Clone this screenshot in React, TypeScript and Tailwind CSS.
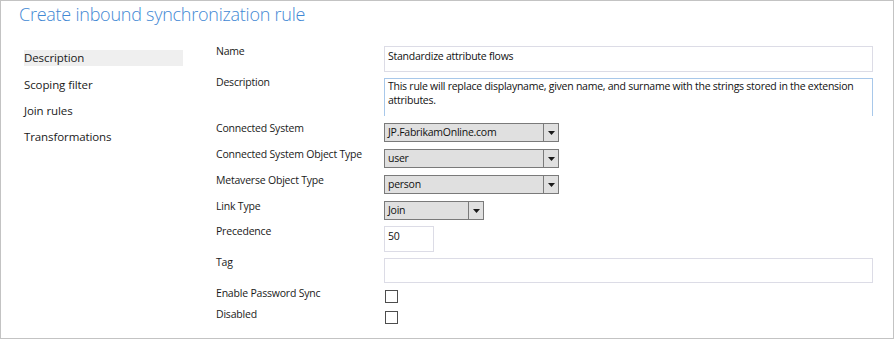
import React from "react"

const font = { fontFamily: "'Open Sans', 'Noto Sans', sans-serif" }

function Arrow() {
    return (
        <svg width="7" height="4" viewBox="0 0 7 4" className="block">
            <path d="M0 0 H7 L3.5 4 Z" fill="#1a1a1a" />
        </svg>
    )
}

function Select({ value, width, split }: { value: string; width: string; split: string }) {
    return (
        <div className={`flex h-[19px] ${width} border border-[#7a7a7a] bg-[#e0e0e0]`}>
            <div className={`${split} flex items-center pl-[3px] text-[10.5px] leading-none tracking-[-0.25px] text-[#111]`}>{value}</div>
            <div className="flex flex-1 items-center justify-center border-l border-[#7a7a7a]">
                <Arrow />
            </div>
        </div>
    )
}

function Row({ label, mt, fieldMt, children }: { label: string; mt: string; fieldMt: string; children: React.ReactNode }) {
    return (
        <div className={`flex items-start ${mt}`}>
            <div className="w-[168px] shrink-0 text-[10.5px] leading-[14px] tracking-[-0.2px] text-[#1a1a1a]">{label}</div>
            <div className={`${fieldMt} flex-1`}>{children}</div>
        </div>
    )
}

export default function App() {
    return (
        <div style={font} className="relative h-[339px] w-[895px] bg-white">
            <div className="h-[339px] w-[894px] border border-[#c3c3c3]">
                {/* Title */}
                <div className="pl-[18px] pt-[1px] text-[18px] font-light leading-[24px] tracking-[-0.25px] text-[#3f88d4]">
                    Create inbound synchronization rule
                </div>

                <div className="flex pt-[18px]">
                    {/* Left nav */}
                    <nav className="w-[215px] shrink-0 pl-[23px] pt-[6px] text-[11.5px] tracking-[-0.1px] text-[#1a1a1a]">
                        <div className="w-[159px] bg-[#efefef] leading-[16px]">Description</div>
                        <div className="mt-[11px] leading-[16px]">Scoping filter</div>
                        <div className="mt-[10px] leading-[16px]">Join rules</div>
                        <div className="mt-[10px] leading-[16px]">Transformations</div>
                    </nav>

                    {/* Form */}
                    <div className="w-[656px]">
                        <Row label="Name" mt="mt-0" fieldMt="mt-[2px]">
                            <div className="h-[26px] w-[489px] border border-[#dcdce6] px-[3px] pt-[2px] text-[10.5px] leading-[14px] tracking-[-0.25px] text-[#111]">
                                Standardize attribute flows
                            </div>
                        </Row>
                        <Row label="Description" mt="mt-[3px]" fieldMt="mt-[3px]">
                            <div className="h-[38px] w-[489px] border border-b-0 border-[#a8c8ea] px-[3px] pt-0 text-[10.5px] leading-[14px] tracking-[-0.25px] text-[#111]">
                                This rule will replace displayname, given name, and surname with the strings stored in the extension attributes.
                            </div>
                        </Row>
                        <Row label="Connected System" mt="mt-[5px]" fieldMt="mt-[2px]">
                            <Select value="JP.FabrikamOnline.com" width="w-[175px]" split="w-[158px]" />
                        </Row>
                        <Row label="Connected System Object Type" mt="mt-[5px]" fieldMt="mt-[2px]">
                            <Select value="user" width="w-[175px]" split="w-[158px]" />
                        </Row>
                        <Row label="Metaverse Object Type" mt="mt-[5px]" fieldMt="mt-[2px]">
                            <Select value="person" width="w-[175px]" split="w-[158px]" />
                        </Row>
                        <Row label="Link Type" mt="mt-[5px]" fieldMt="mt-[2px]">
                            <Select value="Join" width="w-[100px]" split="w-[83px]" />
                        </Row>
                        <Row label="Precedence" mt="mt-[4px]" fieldMt="mt-[2px]">
                            <div className="h-[26px] w-[50px] border border-[#dcdce6] px-[3px] pt-[2px] text-[10.5px] leading-[14px] tracking-[-0.25px] text-[#111]">
                                50
                            </div>
                        </Row>
                        <Row label="Tag" mt="mt-[3px]" fieldMt="mt-[3px]">
                            <div className="h-[25px] w-[489px] border border-[#dcdce6]" />
                        </Row>
                        <Row label="Enable Password Sync" mt="mt-[3px]" fieldMt="mt-[4px]">
                            <div className="ml-[1px] h-[13px] w-[13px] border border-[#4d4d4d] bg-white" />
                        </Row>
                        <Row label="Disabled" mt="mt-[4px]" fieldMt="mt-[4px]">
                            <div className="ml-[1px] h-[13px] w-[13px] border border-[#4d4d4d] bg-white" />
                        </Row>
                    </div>
                </div>
            </div>
        </div>
    )
}
